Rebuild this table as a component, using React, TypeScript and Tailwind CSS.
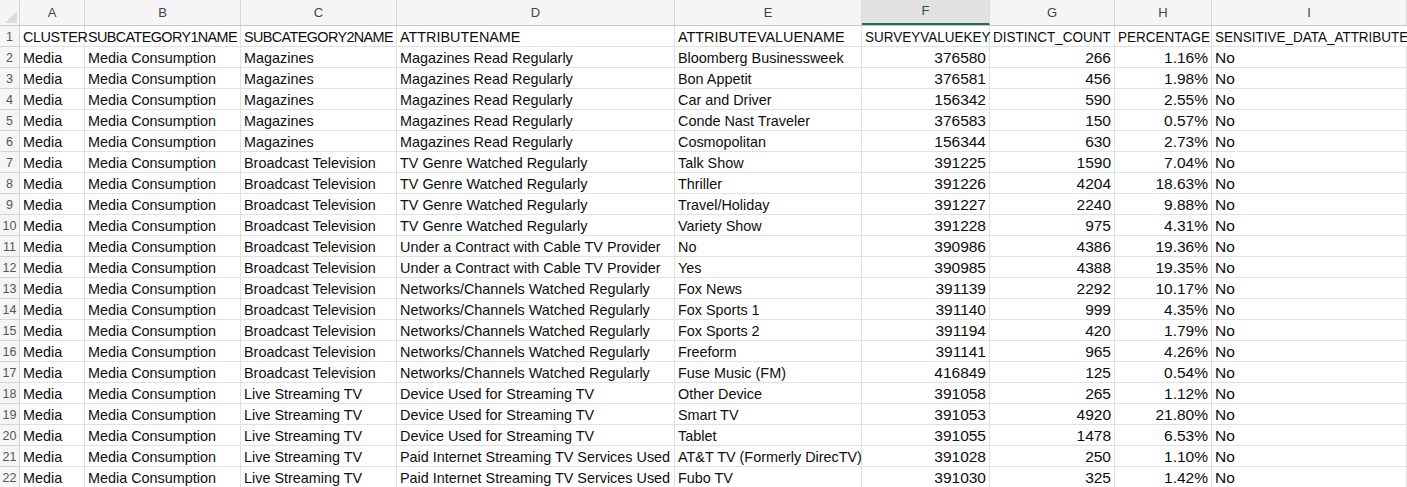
const cols = ['A', 'B', 'C', 'D', 'E', 'F', 'G', 'H', 'I'];

const rows: string[][] = [
  ['Media', 'Media Consumption', 'Magazines', 'Magazines Read Regularly', 'Bloomberg Businessweek', '376580', '266', '1.16%', 'No'],
  ['Media', 'Media Consumption', 'Magazines', 'Magazines Read Regularly', 'Bon Appetit', '376581', '456', '1.98%', 'No'],
  ['Media', 'Media Consumption', 'Magazines', 'Magazines Read Regularly', 'Car and Driver', '156342', '590', '2.55%', 'No'],
  ['Media', 'Media Consumption', 'Magazines', 'Magazines Read Regularly', 'Conde Nast Traveler', '376583', '150', '0.57%', 'No'],
  ['Media', 'Media Consumption', 'Magazines', 'Magazines Read Regularly', 'Cosmopolitan', '156344', '630', '2.73%', 'No'],
  ['Media', 'Media Consumption', 'Broadcast Television', 'TV Genre Watched Regularly', 'Talk Show', '391225', '1590', '7.04%', 'No'],
  ['Media', 'Media Consumption', 'Broadcast Television', 'TV Genre Watched Regularly', 'Thriller', '391226', '4204', '18.63%', 'No'],
  ['Media', 'Media Consumption', 'Broadcast Television', 'TV Genre Watched Regularly', 'Travel/Holiday', '391227', '2240', '9.88%', 'No'],
  ['Media', 'Media Consumption', 'Broadcast Television', 'TV Genre Watched Regularly', 'Variety Show', '391228', '975', '4.31%', 'No'],
  ['Media', 'Media Consumption', 'Broadcast Television', 'Under a Contract with Cable TV Provider', 'No', '390986', '4386', '19.36%', 'No'],
  ['Media', 'Media Consumption', 'Broadcast Television', 'Under a Contract with Cable TV Provider', 'Yes', '390985', '4388', '19.35%', 'No'],
  ['Media', 'Media Consumption', 'Broadcast Television', 'Networks/Channels Watched Regularly', 'Fox News', '391139', '2292', '10.17%', 'No'],
  ['Media', 'Media Consumption', 'Broadcast Television', 'Networks/Channels Watched Regularly', 'Fox Sports 1', '391140', '999', '4.35%', 'No'],
  ['Media', 'Media Consumption', 'Broadcast Television', 'Networks/Channels Watched Regularly', 'Fox Sports 2', '391194', '420', '1.79%', 'No'],
  ['Media', 'Media Consumption', 'Broadcast Television', 'Networks/Channels Watched Regularly', 'Freeform', '391141', '965', '4.26%', 'No'],
  ['Media', 'Media Consumption', 'Broadcast Television', 'Networks/Channels Watched Regularly', 'Fuse Music (FM)', '416849', '125', '0.54%', 'No'],
  ['Media', 'Media Consumption', 'Live Streaming TV', 'Device Used for Streaming TV', 'Other Device', '391058', '265', '1.12%', 'No'],
  ['Media', 'Media Consumption', 'Live Streaming TV', 'Device Used for Streaming TV', 'Smart TV', '391053', '4920', '21.80%', 'No'],
  ['Media', 'Media Consumption', 'Live Streaming TV', 'Device Used for Streaming TV', 'Tablet', '391055', '1478', '6.53%', 'No'],
  ['Media', 'Media Consumption', 'Live Streaming TV', 'Paid Internet Streaming TV Services Used', 'AT&T TV (Formerly DirecTV)', '391028', '250', '1.10%', 'No'],
  ['Media', 'Media Consumption', 'Live Streaming TV', 'Paid Internet Streaming TV Services Used', 'Fubo TV', '391030', '325', '1.42%', 'No'],
];

const header = ['CLUSTER', 'SUBCATEGORY1NAME', 'SUBCATEGORY2NAME', 'ATTRIBUTENAME', 'ATTRIBUTEVALUENAME', 'SURVEYVALUEKEY', 'DISTINCT_COUNT', 'PERCENTAGE', 'SENSITIVE_DATA_ATTRIBUTE'];
const headerTracking = ['tracking-[-0.4px]', 'tracking-[-0.6px]', 'tracking-[-0.6px]', '', '', '', '', '', ''];

const grid = 'grid grid-cols-[20px_65px_156px_156px_278px_187px_128px_125px_97px_1fr]';
const wide = "font-['Liberation_Sans',Arial,sans-serif] text-[14.4px]";
const narrow = "font-['Liberation_Sans',Arial,sans-serif] text-[15.5px]";

function Cell({ value, idx, isHeader }: { value: string; idx: number; isHeader?: boolean }) {
  const numeric = !isHeader && idx >= 5 && idx <= 7;
  // condensed caps in the narrow-font columns
  const squeeze = isHeader && idx >= 5;
  return (
    <div
      className={`h-[21px] border-r border-b border-[#e1e1e1] px-[3px] pt-px leading-[20px] whitespace-nowrap overflow-visible text-[#0d0d0d] ${idx >= 5 ? narrow : wide} ${numeric ? 'text-right' : 'text-left'} ${isHeader ? headerTracking[idx] : ''}`}
    >
      {squeeze ? <span className="inline-block origin-left scale-x-[0.87]">{value}</span> : value}
    </div>
  );
}

function RowNum({ n }: { n: number }) {
  return (
    <div className="h-[21px] pt-px leading-[20px] text-center text-[12.5px] text-[#555] bg-[#f5f5f5] border-r border-b border-[#d4d4d4] font-['Liberation_Sans',Arial,sans-serif]">
      {n}
    </div>
  );
}

export default function App() {
  return (
    <div className="w-[1407px] h-[487px] overflow-hidden bg-white">
      {/* column letters */}
      <div className={`${grid} h-[26px] bg-[#f5f5f5] border-b border-[#c8c8c8]`}>
        <div className="relative border-r border-[#d4d4d4]">
          <svg className="absolute right-[2px] bottom-[2px]" width="12" height="12" viewBox="0 0 12 12">
            <polygon points="12,0 12,12 0,12" fill="#dcdcdc" />
          </svg>
        </div>
        {cols.map((c) => (
          <div
            key={c}
            className={`flex items-end justify-center pb-[3px] text-[13px] font-['Liberation_Sans',Arial,sans-serif] border-r border-[#d9d9d9] ${c === 'F' ? 'bg-[#e2e2e2] border-b-2 border-b-[#1e7145] text-[#1e5a38]' : 'text-[#444]'}`}
          >
            {c}
          </div>
        ))}
      </div>
      {/* header row */}
      <div className={grid}>
        <RowNum n={1} />
        {header.map((h, i) => (
          <Cell key={i} value={h} idx={i} isHeader />
        ))}
      </div>
      {rows.map((r, ri) => (
        <div key={ri} className={grid}>
          <RowNum n={ri + 2} />
          {r.map((v, i) => (
            <Cell key={i} value={v} idx={i} />
          ))}
        </div>
      ))}
    </div>
  );
}
